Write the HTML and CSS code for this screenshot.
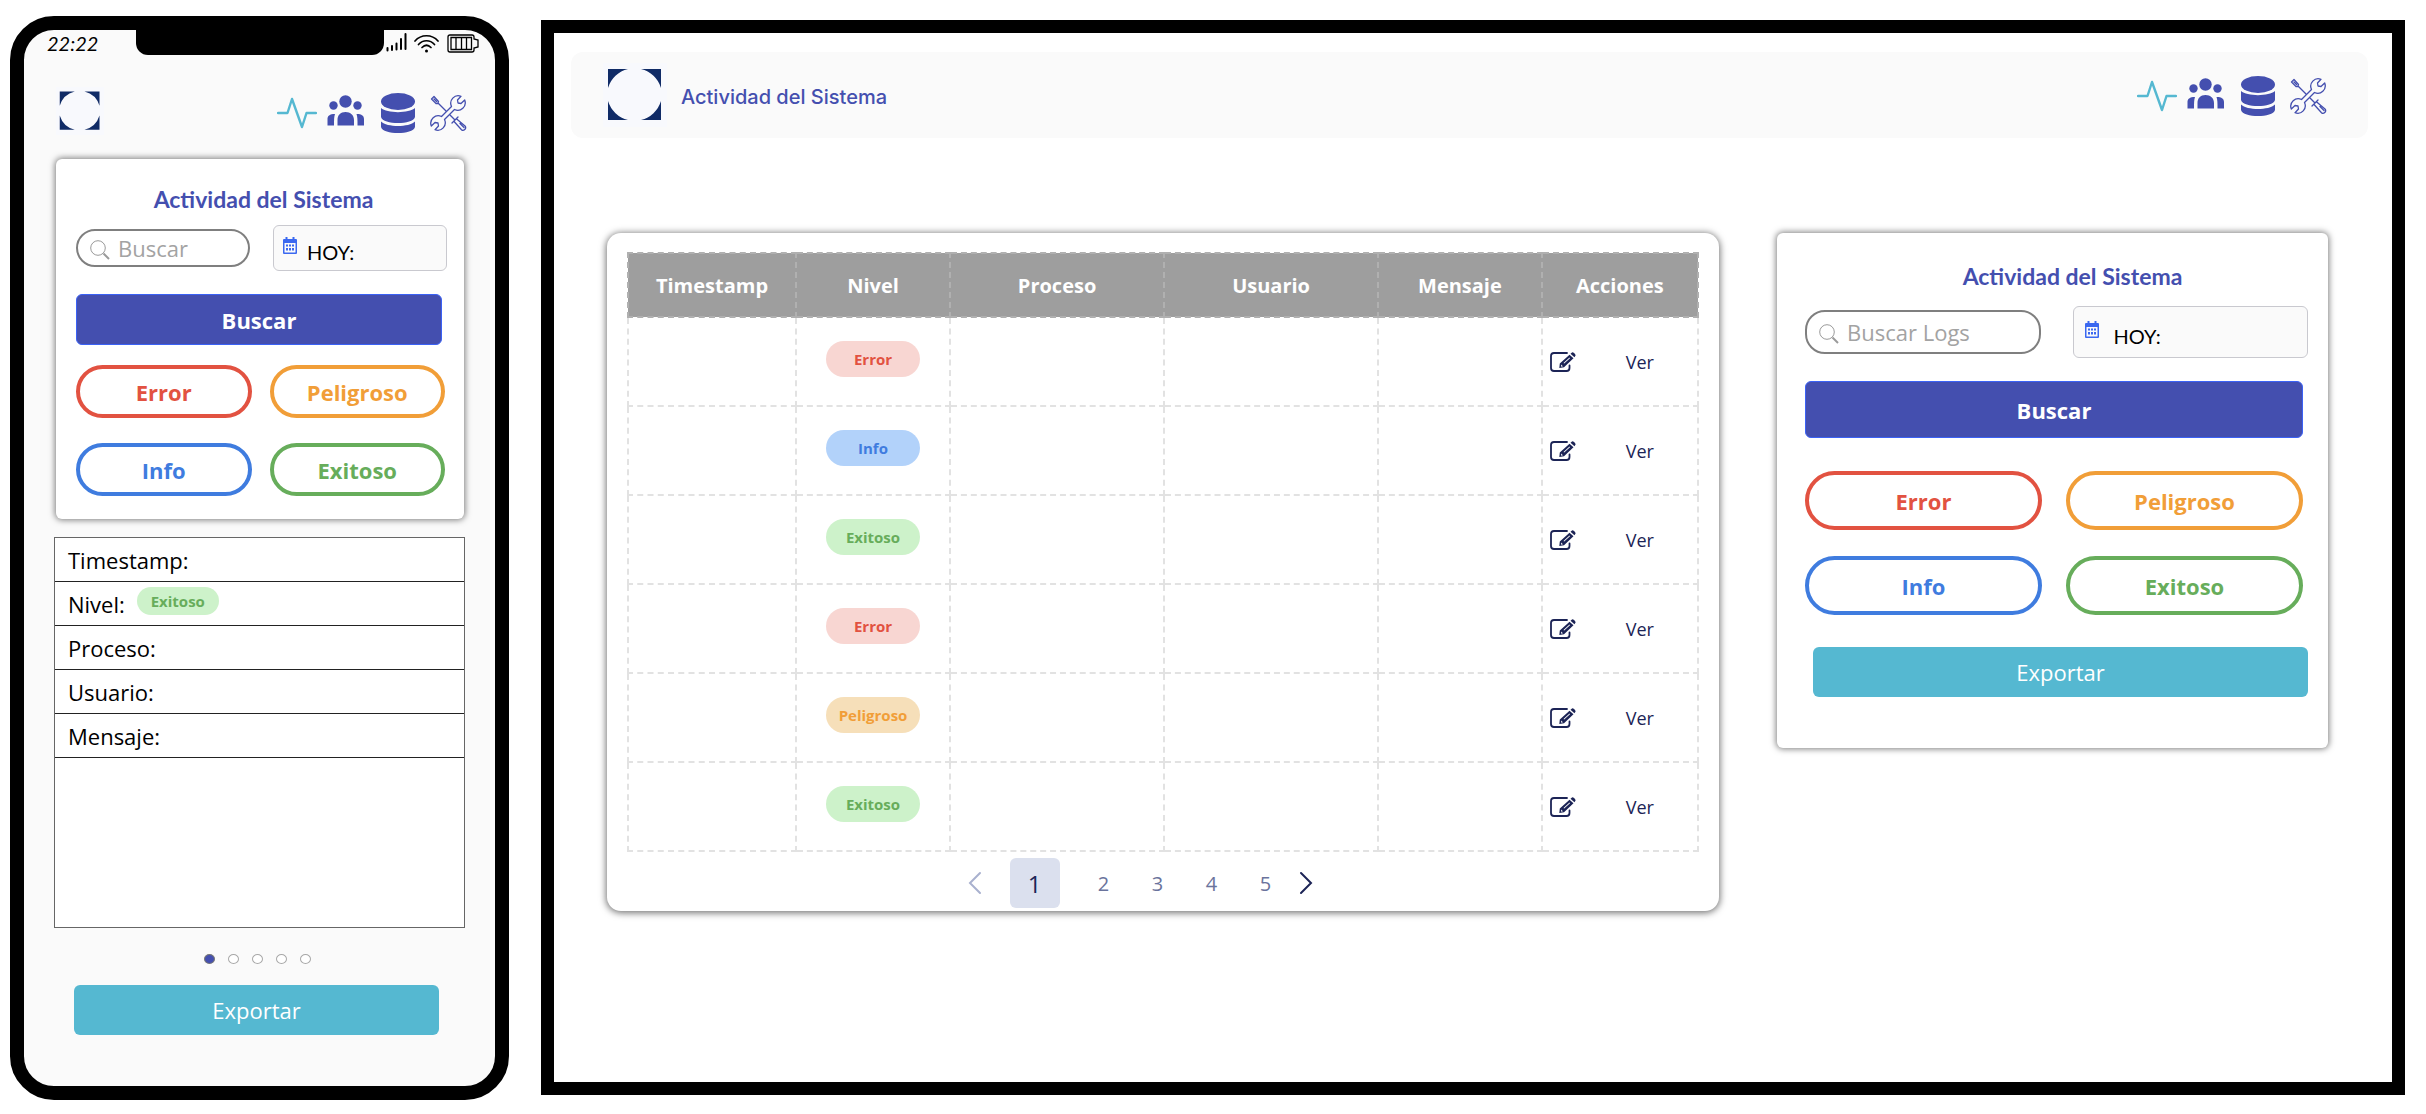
FILE: index.html
```html
<!DOCTYPE html>
<html lang="es">
<head>
<meta charset="utf-8">
<title>Actividad del Sistema</title>
<meta name="viewport" content="width=device-width, initial-scale=1">
<link rel="stylesheet" href="styles.css">
</head>
<body>

<svg class="sprite" aria-hidden="true">
  <symbol id="logo" viewBox="0 0 64 64">
    <rect width="64" height="64" fill="#f8f9fd"/>
    <path fill="#102b66" d="M5 6H25A28 28 0 0 0 5 25ZM58 6V25A28 28 0 0 0 38 6ZM5 57V38A28 28 0 0 0 25 57ZM58 57H38A28 28 0 0 0 58 38Z"/>
  </symbol>
  <symbol id="pulse" viewBox="0 0 40 40">
    <path d="M1 20H10.500L15 6L25 34L29.500 20H39" fill="none" stroke="#55b8d1" stroke-width="2.400" stroke-linecap="round" stroke-linejoin="round"/>
  </symbol>
  <symbol id="people" viewBox="0 4 40 40">
    <g fill="#444faf">
      <circle cx="18.500" cy="12.500" r="6.200"/><circle cx="6.500" cy="16.500" r="4.200"/><circle cx="30.500" cy="16.500" r="4.200"/>
      <path d="M10.500 36.500V31C10.500 26 13.500 23 18.500 23S27 26 27 31V36.500ZM.5 36.500V30C.5 27 2.500 25 8 25C7 28 7 31 7 36.500ZM37 36.500V30C37 27 35 25 29.500 25C30.500 28 30.500 31 30.500 36.500Z"/>
    </g>
  </symbol>
  <symbol id="database" viewBox="0 0 40 40">
    <g fill="#444faf">
      <ellipse cx="21" cy="8.500" rx="17" ry="8.500"/>
      <path d="M4 15C10 20.500 32 20.500 38 15V24C36 32 6 32 4 24ZM4 28.500C10 34.500 32 34.500 38 28.500V34C36 42 6 42 4 34Z"/>
    </g>
  </symbol>
  <symbol id="tools" viewBox="-3 -2 40 40">
    <g fill="none" stroke="#444faf" stroke-width="1.300" stroke-linejoin="round" stroke-linecap="round">
      <path d="M21.500 11.500A7.500 7.500 0 0 1 31 1.300L27.500 5L28 8L31 8.500L34.700 5A7.500 7.500 0 0 1 24.500 14.500L14.500 24.500A7.500 7.500 0 0 1 5 34.700L8.500 31L8 28L5 27.500L1.300 31A7.500 7.500 0 0 1 11.500 21.500Z"/>
      <path d="M1.500 4L4 1.500L8.500 6.500L7.800 8.500L6 8.500ZM4 4L6.500 6.500M8 8L16 16M20 20L24.500 24.500M22 28L28 22M24.300 26.800L31.500 34.700C33.500 36.500 37 33.500 35 31L27 24.200M30 28.500L34 32.500"/>
    </g>
  </symbol>
  <symbol id="calendar" viewBox="0 0 14 17">
    <path fill="#3b68f0" fill-rule="evenodd" d="M2.500 0H4.500V2H9.500V0H11.500V2H13A1 1 0 0 1 14 3V16A1 1 0 0 1 13 17H1A1 1 0 0 1 0 16V3A1 1 0 0 1 1 2H2.500ZM1.500 6V15.500H12.500V6Z"/>
    <path fill="#3b68f0" d="M3 7.500H5V9.500H3ZM6 7.500H8V9.500H6ZM9 7.500H11V9.500H9ZM3 11H5V13.500H3ZM6 11H8V13.500H6ZM9 11H11V13.500H9Z"/>
  </symbol>
  <symbol id="search" viewBox="0 0 20 20">
    <g fill="none" stroke="#9a9a9a"><circle cx="8" cy="8" r="7.300" stroke-width="1"/><path d="M13.500 13.500L19 19" stroke-width="2"/></g>
  </symbol>
  <symbol id="edit" viewBox="0 0 26 20">
    <path fill="none" stroke="#1c2456" stroke-width="1.800" stroke-linecap="round" d="M17 1H4A3 3 0 0 0 1 4V16A3 3 0 0 0 4 19H16.500A3 3 0 0 0 19.500 16V13.500"/>
    <path fill="#1c2456" d="M9.300 16L9.800 11.500L19.500 2.800L23.500 6.300L14 15.300ZM20.500 1.800L22.300 .3C23.500 .3 25.500 2 25.600 3.400L24.400 5.300Z"/>
    <path fill="#fff" d="M11 12.500L13 14.300L11.200 14.700ZM13.500 11L19.500 5.600L20 6.200L14.200 11.600Z"/>
  </symbol>
</svg>

<section class="phone" aria-label="Vista móvil">
  <div class="notch"></div>
  <div class="status">
    <span class="clock">22:22</span>
    <svg width="93" height="22" viewBox="0 0 93 22" aria-hidden="true">
      <path d="M1.500 16V18.500M6 14V18M10.500 11.500V17.500M15 7V17M19.500 2V17" stroke="#000" stroke-width="2" stroke-linecap="round"/>
      <g fill="none" stroke="#000" stroke-width="1.700" stroke-linecap="round"><path d="M29 9C35 2 46 2 52 9M32.500 12.500C37 7.500 44 7.500 48.500 12.500M36 15.500C39 12.500 42 12.500 45 15.500"/></g>
      <circle cx="40.500" cy="19" r="1.500"/>
      <path d="M64 3H86Q88 3 88 5V7L92 8V15L88 16V18Q88 20 86 20H64Q62 20 62 18V5Q62 3 64 3ZM65 5.500H85.500V17.500H65ZM70 5.500V17.500M75.500 5.500V17.500M80.500 5.500V17.500" fill="none" stroke="#000" stroke-width="1.300"/>
    </svg>
  </div>
  <header class="phone-head">
    <svg class="logo-sm" role="img" aria-label="Logo"><use href="#logo"/></svg>
    <nav class="icons">
      <a href="#actividad" aria-label="Actividad"><svg><use href="#pulse"/></svg></a>
      <a href="#usuarios" aria-label="Usuarios"><svg><use href="#people"/></svg></a>
      <a href="#datos" aria-label="Datos"><svg><use href="#database"/></svg></a>
      <a href="#ajustes" aria-label="Ajustes"><svg><use href="#tools"/></svg></a>
    </nav>
  </header>

  <form class="filters compact">
    <h2>Actividad del Sistema</h2>
    <div class="fields">
      <label class="search"><svg><use href="#search"/></svg><input type="text" placeholder="Buscar" aria-label="Buscar"></label>
      <label class="date"><svg><use href="#calendar"/></svg><input type="text" value="HOY:" aria-label="Fecha"></label>
    </div>
    <button type="button" class="primary">Buscar</button>
    <div class="levels">
      <button type="button" class="level error">Error</button>
      <button type="button" class="level peligroso">Peligroso</button>
      <button type="button" class="level info">Info</button>
      <button type="button" class="level exitoso">Exitoso</button>
    </div>
  </form>

  <div class="detail">
    <p>Timestamp:</p>
    <p>Nivel: <span class="badge small b-exitoso">Exitoso</span></p>
    <p>Proceso:</p>
    <p>Usuario:</p>
    <p>Mensaje:</p>
  </div>
  <div class="dots"><i class="on"></i><i></i><i></i><i></i><i></i></div>
  <button type="button" class="export">Exportar</button>
</section>

<main class="desktop">
  <header class="topbar">
    <svg class="logo" role="img" aria-label="Logo"><use href="#logo"/></svg>
    <h1>Actividad del Sistema</h1>
    <nav class="icons">
      <a href="#actividad" aria-label="Actividad"><svg><use href="#pulse"/></svg></a>
      <a href="#usuarios" aria-label="Usuarios"><svg><use href="#people"/></svg></a>
      <a href="#datos" aria-label="Datos"><svg><use href="#database"/></svg></a>
      <a href="#ajustes" aria-label="Ajustes"><svg><use href="#tools"/></svg></a>
    </nav>
  </header>

  <div class="content">
    <section class="logs">
      <table>
        <colgroup><col class="c-time"><col class="c-level"><col class="c-wide"><col class="c-wide"><col class="c-msg"><col class="c-act"></colgroup>
        <thead>
          <tr><th>Timestamp</th><th>Nivel</th><th>Proceso</th><th>Usuario</th><th>Mensaje</th><th>Acciones</th></tr>
        </thead>
        <tbody>
          <tr><td></td><td><span class="badge b-error">Error</span></td><td></td><td></td><td></td><td><div class="acts"><button type="button" aria-label="Editar"><svg><use href="#edit"/></svg></button><a href="#ver">Ver</a></div></td></tr>
          <tr><td></td><td><span class="badge b-info">Info</span></td><td></td><td></td><td></td><td><div class="acts"><button type="button" aria-label="Editar"><svg><use href="#edit"/></svg></button><a href="#ver">Ver</a></div></td></tr>
          <tr><td></td><td><span class="badge b-exitoso">Exitoso</span></td><td></td><td></td><td></td><td><div class="acts"><button type="button" aria-label="Editar"><svg><use href="#edit"/></svg></button><a href="#ver">Ver</a></div></td></tr>
          <tr><td></td><td><span class="badge b-error">Error</span></td><td></td><td></td><td></td><td><div class="acts"><button type="button" aria-label="Editar"><svg><use href="#edit"/></svg></button><a href="#ver">Ver</a></div></td></tr>
          <tr><td></td><td><span class="badge b-peligroso">Peligroso</span></td><td></td><td></td><td></td><td><div class="acts"><button type="button" aria-label="Editar"><svg><use href="#edit"/></svg></button><a href="#ver">Ver</a></div></td></tr>
          <tr><td></td><td><span class="badge b-exitoso">Exitoso</span></td><td></td><td></td><td></td><td><div class="acts"><button type="button" aria-label="Editar"><svg><use href="#edit"/></svg></button><a href="#ver">Ver</a></div></td></tr>
        </tbody>
      </table>
      <nav class="pager" aria-label="Paginación">
        <button type="button" class="arrow" aria-label="Anterior"><svg viewBox="0 0 14 24"><path d="M12 2L2 12L12 22" stroke="#a9b1cf"/></svg></button>
        <button type="button" class="current">1</button>
        <div class="pages">
          <button type="button">2</button><button type="button">3</button><button type="button">4</button><button type="button">5</button>
        </div>
        <button type="button" class="arrow" aria-label="Siguiente"><svg viewBox="0 0 14 24"><path d="M2 2L12 12L2 22" stroke="#1c2456"/></svg></button>
      </nav>
    </section>

    <form class="filters">
      <h2>Actividad del Sistema</h2>
      <div class="fields">
        <label class="search"><svg><use href="#search"/></svg><input type="text" placeholder="Buscar Logs" aria-label="Buscar Logs"></label>
        <label class="date"><svg><use href="#calendar"/></svg><input type="text" value="HOY:" aria-label="Fecha"></label>
      </div>
      <button type="button" class="primary">Buscar</button>
      <div class="levels">
        <button type="button" class="level error">Error</button>
        <button type="button" class="level peligroso">Peligroso</button>
        <button type="button" class="level info">Info</button>
        <button type="button" class="level exitoso">Exitoso</button>
      </div>
      <button type="button" class="export">Exportar</button>
    </form>
  </div>
</main>

</body>
</html>
```
FILE: styles.css
```css
* { box-sizing: border-box; }

body {
  margin: 0;
  padding: 16px 21px 12px 10px;
  display: flex;
  align-items: flex-start;
  gap: 32px;
  background: #fff;
  color: #000;
  font-family: "Open Sans", sans-serif;
  font-size: 22px;
}

h1, h2, p { margin: 0; }
a { color: inherit; text-decoration: none; }
button, input { font: inherit; color: inherit; }
button { margin: 0; padding: 0; border: 0; background: none; }
svg { display: block; }
.sprite { position: absolute; width: 0; height: 0; }

/* Phone */
.phone {
  position: relative;
  flex: 0 0 499px;
  padding-bottom: 51px;
  border: 14px solid #000;
  border-radius: 44px;
  background: #fafafa;
}
.notch {
  position: absolute;
  top: -1px;
  left: 112px;
  right: 111px;
  height: 26px;
  border-radius: 0 0 12px 12px;
  background: #000;
}
.status {
  display: flex;
  align-items: center;
  justify-content: space-between;
  height: 26px;
  padding: 0 16px 0 23px;
}
.clock {
  font-family: Lato, sans-serif;
  font-style: italic;
  font-size: 20px;
  line-height: 26px;
}
.phone-head {
  display: flex;
  align-items: center;
  justify-content: space-between;
  margin: 31px 28px 24px 32px;
}
.phone-head .icons { padding-top: 4px; }
.logo-sm { width: 48px; height: 48px; }

.icons { display: flex; gap: 10px; }
.icons svg { width: 40px; height: 40px; }

/* Filter card */
.filters {
  display: flex;
  flex-direction: column;
  padding: 29px 20px 51px 28px;
  border-radius: 6px;
  background: #fff;
  box-shadow: 0 0 6px 1px rgba(0, 0, 0, .5);
}
.filters h2 {
  margin-bottom: 16px;
  padding-left: 32px;
  color: #444faf;
  font-family: Lato, sans-serif;
  font-size: 23px;
  font-weight: 700;
  line-height: 28px;
  text-align: center;
}
.fields {
  display: grid;
  grid-template-columns: 1fr 1fr;
  align-items: center;
  gap: 32px;
}
.search {
  display: flex;
  align-items: center;
  height: 44px;
  padding: 0 12px;
  gap: 8px;
  border: 2px solid #7f7f7f;
  border-radius: 20px;
  background: #fff;
}
.search svg { flex: none; width: 20px; height: 20px; margin-top: 4px; }
.search input, .date input {
  width: 100%;
  min-width: 0;
  padding: 0;
  border: 0;
  outline: 0;
  background: none;
}
.search input::placeholder { color: #a3a3a3; opacity: 1; }
.date {
  display: flex;
  align-items: center;
  height: 52px;
  padding: 0 11px;
  gap: 15px;
  border: 1px solid #c9c9cf;
  border-radius: 6px;
  background: #fafafa;
}
.date svg { flex: none; width: 14px; height: 17px; margin-bottom: 6px; }
.date input {
  height: 26px;
  margin-top: 8px;
  font-family: Lato, sans-serif;
  font-size: 20px;
}
.primary {
  height: 57px;
  margin: 23px 5px 0 0;
  border: 1px solid #3b62f5;
  border-radius: 6px;
  background: #444faf;
  color: #fff;
  font-weight: 700;
}
.levels {
  display: grid;
  grid-template-columns: 1fr 1fr;
  gap: 26px 24px;
  margin: 33px 5px 0 0;
}
.level {
  height: 59px;
  border: 4px solid;
  border-radius: 30px;
  background: #fff;
  font-weight: 700;
}
.error { border-color: #e25241; color: #e25241; }
.peligroso { border-color: #f19e38; color: #f19e38; }
.info { border-color: #3f7cdf; color: #3f7cdf; }
.exitoso { border-color: #67ad5b; color: #67ad5b; }
.export {
  height: 50px;
  border-radius: 6px;
  background: #55b8d1;
  color: #fff;
}
.filters .export { margin: 32px 0 0 8px; }

.compact {
  margin: 0 31px 18px 32px;
  padding: 26px 17px 23px 20px;
}
.compact h2 { margin-bottom: 12px; padding-left: 4px; }
.compact .fields { gap: 23px; }
.compact .search { height: 38px; }
.compact .date { height: 46px; padding: 0 9px; gap: 10px; }
.compact .primary { height: 51px; }
.compact .levels { gap: 25px 18px; margin: 20px 2px 0 0; }
.compact .level { height: 53px; }

/* Log entry on the phone */
.detail {
  min-height: 391px;
  margin: 0 30px;
  border: 1px solid #666;
  background: #fff;
}
.detail p {
  display: flex;
  align-items: center;
  gap: 12px;
  height: 44px;
  padding-left: 13px;
  border-bottom: 1px solid #222;
}
.dots {
  display: flex;
  justify-content: center;
  gap: 13px;
  margin: 26px 4px 21px 0;
}
.dots i {
  width: 11px;
  height: 10px;
  border: 1px solid #a8a8a8;
  border-radius: 50%;
  background: #fff;
}
.dots .on { border-color: #777; background: #444faf; }
.phone > .export {
  display: block;
  width: calc(100% - 106px);
  margin: 0 56px 0 50px;
}

/* Desktop */
.desktop {
  flex: 1;
  min-width: 0;
  min-height: calc(100vh - 39px);
  margin-top: 4px;
  padding: 19px 0 40px;
  border: 13px solid #000;
  background: #fff;
}
.topbar {
  display: flex;
  align-items: center;
  margin: 0 24px 95px 17px;
  padding: 11px 41px 11px 32px;
  border-radius: 12px;
  background: #fafafa;
}
.logo { width: 64px; height: 64px; }
.topbar h1 {
  flex: 1;
  margin-left: 14px;
  padding-top: 4px;
  color: #444faf;
  font-family: Inter, sans-serif;
  font-size: 20px;
  font-weight: 500;
}
.topbar .icons { padding-top: 2px; }
.content {
  display: grid;
  grid-template-columns: 1112fr 551fr;
  align-items: start;
  gap: 58px;
  padding: 0 64px 0 53px;
}
.logs {
  padding: 19px 20px 3px;
  border-radius: 14px;
  background: #fff;
  box-shadow: 0 1px 7px 1px rgba(0, 0, 0, .55);
}
table {
  width: 100%;
  table-layout: fixed;
  border-collapse: collapse;
}
.c-time { width: 15.7%; }
.c-level { width: 14.4%; }
.c-wide { width: 20%; }
.c-msg { width: 15.3%; }
.c-act { width: 14.6%; }
th, td { padding: 0; border: 2px dashed #e2e2e2; text-align: center; }
th {
  height: 64px;
  border-color: #b0b0b0;
  background: #9e9e9e;
  color: #fff;
  font-size: 20px;
}
td { height: 89px; }
.badge {
  display: inline-block;
  width: 94px;
  margin-bottom: 6px;
  border-radius: 18px;
  font-size: 15px;
  font-weight: 700;
  line-height: 36px;
  text-align: center;
  vertical-align: middle;
}
.small { width: 82px; line-height: 28px; }
.b-error { background: #f8d6d2; color: #e25241; }
.b-info { background: #b2d2fa; color: #3f7cdf; }
.b-exitoso { background: #cdf2ca; color: #67ad5b; }
.b-peligroso { background: #f6dfb9; color: #f19e38; }
.acts {
  display: flex;
  align-items: center;
  gap: 50px;
  padding-left: 7px;
  color: #1c2456;
  font-size: 18px;
}
.acts svg { width: 26px; height: 20px; }

.pager {
  display: flex;
  align-items: center;
  justify-content: center;
  margin: 6px 46px 0 0;
  color: #6a739c;
  font-size: 20px;
}
.arrow svg { width: 14px; height: 24px; fill: none; stroke-width: 2; stroke-linecap: round; }
.current {
  width: 50px;
  height: 50px;
  margin: 0 17px 0 28px;
  border-radius: 6px;
  background: #dbe0ee;
  color: #1c2456;
  font-size: 24px;
}
.pages { display: flex; margin-right: 6px; }
.pages button { width: 54px; }
```
